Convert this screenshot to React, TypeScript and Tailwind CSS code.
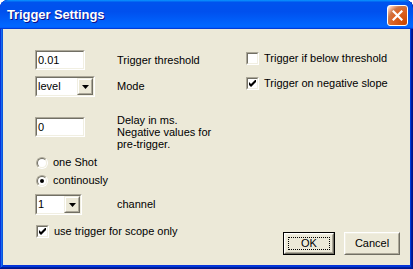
import React from "react";

function Sunken({ w, h, round = false, children }: { w: number; h: number; round?: boolean; children?: React.ReactNode }) {
  return (
    <div
      style={{ width: w, height: h }}
      className={`border border-t-[#ACA899] border-l-[#ACA899] border-b-white border-r-white ${round ? "rounded-full" : ""}`}
    >
      <div
        className={`w-full h-full border border-t-[#716F64] border-l-[#716F64] border-b-[#F1EFE2] border-r-[#F1EFE2] bg-white flex items-center ${round ? "rounded-full justify-center" : ""}`}
      >
        {children}
      </div>
    </div>
  );
}

function Edit({ value, w }: { value: string; w: number }) {
  return (
    <Sunken w={w} h={20}>
      <span className="pl-[1px] leading-none">{value}</span>
    </Sunken>
  );
}

function Arrow() {
  return (
    <svg width="7" height="4" viewBox="0 0 7 4">
      <polygon points="0,0 7,0 3.5,4" fill="#000" />
    </svg>
  );
}

function Combo({ value, w }: { value: string; w: number }) {
  return (
    <Sunken w={w} h={21}>
      <span className="pl-[1px] flex-1 leading-none">{value}</span>
      <div className="h-full w-[16px] border border-t-[#F1EFE2] border-l-[#F1EFE2] border-b-[#716F64] border-r-[#716F64]">
        <div className="w-full h-full bg-[#ECE9D8] border border-t-white border-l-white border-b-[#ACA899] border-r-[#ACA899] flex items-center justify-center">
          <Arrow />
        </div>
      </div>
    </Sunken>
  );
}

function Check({ checked }: { checked: boolean }) {
  return (
    <Sunken w={13} h={13}>
      <div className="w-full h-full flex items-center justify-center">
        {checked && (
          <svg width="7" height="7" viewBox="0 0 7 7">
            <polygon points="0,2 2,4 7,-1 7,2 2,7 0,5" fill="#000" />
          </svg>
        )}
      </div>
    </Sunken>
  );
}

function Radio({ checked }: { checked: boolean }) {
  return (
    <Sunken w={12} h={12} round>
      {checked && <div className="w-[4px] h-[4px] rounded-full bg-black" />}
    </Sunken>
  );
}

function Button({ label, isDefault }: { label: string; isDefault?: boolean }) {
  return (
    <div className={`h-[23px] ${isDefault ? "w-[52px] border border-black" : "w-[56px]"}`}>
      <div className="w-full h-full border border-t-white border-l-white border-b-[#716F64] border-r-[#716F64]">
        <div className="w-full h-full border border-t-[#F1EFE2] border-l-[#F1EFE2] border-b-[#ACA899] border-r-[#ACA899] bg-[#ECE9D8] flex items-center justify-center p-[2px]">
          <div className={`w-full h-full flex items-center justify-center ${isDefault ? "border border-dotted border-black" : ""}`}>
            <span className="leading-none">{label}</span>
          </div>
        </div>
      </div>
    </div>
  );
}

export default function App() {
  return (
    <div className="w-[413px] h-[269px] bg-white font-['Liberation_Sans',Arial,sans-serif] text-[11px] text-black">
      <div className="w-full h-full flex flex-col rounded-t-[8px] overflow-hidden px-[3px] pb-[4px] bg-[#0831d9] shadow-[inset_-1px_-1px_#00138c,inset_1px_1px_#0831d9,inset_-2px_-2px_#001ea0,inset_2px_2px_#166aee,inset_-3px_-3px_#003bda,inset_3px_3px_#0855dd]">
        {/* Title bar */}
        <div className="-mx-[3px] h-[29px] shrink-0 flex items-center justify-between pl-[7px] pr-[5px] rounded-t-[8px] bg-[linear-gradient(180deg,#0997ff,#0053ee_8%,#0050ee_40%,#06f_88%,#06f_93%,#005bff_95%,#003dd7_96%,#003dd7)]">
          <span className="text-white font-bold text-[13px] [text-shadow:1px_1px_#0f1089] tracking-[-0.1px]">Trigger Settings</span>
          <div className="w-[21px] h-[21px] mt-[1px] rounded-[3px] border border-white bg-[radial-gradient(circle_at_90%_90%,#cc4600_0%,#dc6527_55%,#cd7546_70%,#ffccb2_90%,#fff_100%)] flex items-center justify-center">
            <svg width="11" height="11" viewBox="0 0 11 11">
              <path d="M1.5 1.5 L9.5 9.5 M9.5 1.5 L1.5 9.5" stroke="#fff" strokeWidth="2.2" strokeLinecap="square" />
            </svg>
          </div>
        </div>
        {/* Client */}
        <div className="flex-1 bg-[#ECE9D8] flex">
          {/* Left column */}
          <div className="w-[243px] pl-[32px] pt-[21px] flex flex-col">
            <div className="flex items-center h-[20px]">
              <div className="w-[82px]">
                <Edit value="0.01" w={50} />
              </div>
              <span>Trigger threshold</span>
            </div>
            <div className="flex items-center h-[21px] mt-[6px]">
              <div className="w-[82px]">
                <Combo value="level" w={60} />
              </div>
              <span>Mode</span>
            </div>
            <div className="flex items-start mt-[20px]">
              <div className="w-[82px]">
                <Edit value="0" w={50} />
              </div>
              <span className="-mt-[3px] leading-[12px]">
                Delay in ms.
                <br />
                Negative values for
                <br />
                pre-trigger.
              </span>
            </div>
            <div className="flex items-center h-[13px] mt-[6px] pl-[1px] gap-[5px]">
              <Radio checked={false} />
              <span>one Shot</span>
            </div>
            <div className="flex items-center h-[13px] mt-[5px] pl-[1px] gap-[5px]">
              <Radio checked={true} />
              <span>continously</span>
            </div>
            <div className="flex items-center h-[21px] mt-[7px]">
              <div className="w-[82px]">
                <Combo value="1" w={47} />
              </div>
              <span>channel</span>
            </div>
            <div className="flex items-center h-[13px] mt-[10px] pl-[1px] gap-[5px]">
              <Check checked={true} />
              <span>use trigger for scope only</span>
            </div>
          </div>
          {/* Right column */}
          <div className="flex-1 flex flex-col pt-[23px] pr-[10px] pb-[10px]">
            <div className="flex items-center h-[13px] gap-[5px]">
              <Check checked={false} />
              <span>Trigger if below threshold</span>
            </div>
            <div className="flex items-center h-[13px] mt-[12px] gap-[5px]">
              <Check checked={true} />
              <span>Trigger on negative slope</span>
            </div>
            <div className="mt-auto flex justify-end gap-[9px]">
              <Button label="OK" isDefault />
              <Button label="Cancel" />
            </div>
          </div>
        </div>
      </div>
    </div>
  );
}
